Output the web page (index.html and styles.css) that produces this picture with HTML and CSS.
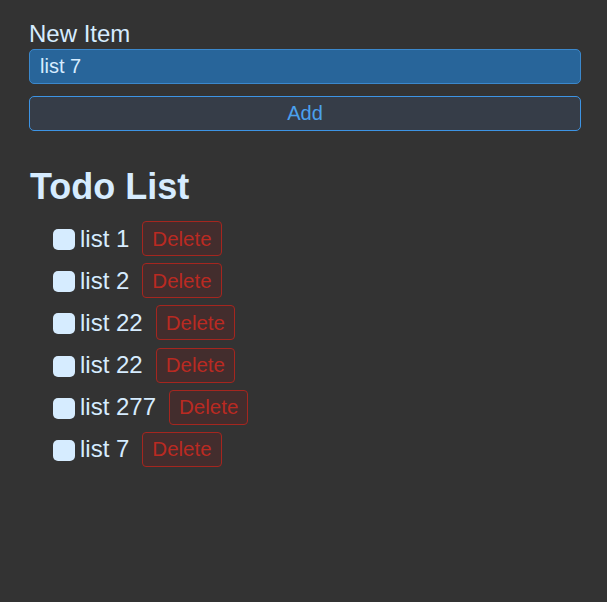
FILE: index.html
```html
<!DOCTYPE html>
<html>
<head>
<meta charset="utf-8">
<link rel="stylesheet" href="styles.css">
</head>
<body>
<div class="app">
  <label class="label" for="new-item">New Item</label>
  <input id="new-item" class="input" type="text" value="list 7">
  <button class="add-btn">Add</button>
  <h2 class="title">Todo List</h2>
  <ul class="list">
    <li class="item"><span class="check"></span><span class="text">list 1</span><button class="del">Delete</button></li>
    <li class="item"><span class="check"></span><span class="text">list 2</span><button class="del">Delete</button></li>
    <li class="item"><span class="check"></span><span class="text">list 22</span><button class="del">Delete</button></li>
    <li class="item"><span class="check"></span><span class="text">list 22</span><button class="del">Delete</button></li>
    <li class="item"><span class="check"></span><span class="text">list 277</span><button class="del">Delete</button></li>
    <li class="item"><span class="check"></span><span class="text">list 7</span><button class="del">Delete</button></li>
  </ul>
</div>
</body>
</html>
```
FILE: styles.css
```css
html, body {
  margin: 0;
  padding: 0;
  background: #333333;
}
body {
  font-family: "Liberation Sans", Arial, sans-serif;
  color: #d6ecff;
}
.app {
  padding: 20px 26px 0 29px;
  display: flex;
  flex-direction: column;
}
.label {
  font-size: 24px;
  line-height: 28px;
  margin-bottom: 1px;
}
.input {
  box-sizing: border-box;
  height: 35px;
  width: 100%;
  margin: 0;
  padding: 0 10px;
  font-family: inherit;
  font-size: 20px;
  color: #d6ecff;
  background: #28659a;
  border: 1px solid #3b88cc;
  border-radius: 5px;
  outline: none;
}
.add-btn {
  box-sizing: border-box;
  height: 35px;
  width: 100%;
  margin: 12px 0 0;
  padding: 0;
  font-family: inherit;
  font-size: 20px;
  color: #4ba1ee;
  background: #363d48;
  border: 1px solid #3d94e4;
  border-radius: 5px;
}
.title {
  margin: 36px 0 0 1px;
  font-size: 36px;
  line-height: 40px;
  font-weight: bold;
}
.list {
  list-style: none;
  margin: 14px 0 0;
  padding: 0 0 0 24px;
  display: flex;
  flex-direction: column;
  gap: 7.2px;
}
.item {
  display: flex;
  align-items: center;
  height: 35px;
}
.check {
  width: 22px;
  height: 21px;
  border-radius: 5px;
  background: #d6ecff;
  margin-right: 5px;
  margin-top: 2px;
}
.text {
  font-size: 24px;
  line-height: 28px;
  margin-right: 13px;
}
.del {
  box-sizing: border-box;
  height: 35px;
  margin: 0;
  padding: 0 9px;
  font-family: inherit;
  font-size: 20.5px;
  color: #ba2a22;
  background: #432d2d;
  border: 1px solid #a5261f;
  border-radius: 4px;
}
```
